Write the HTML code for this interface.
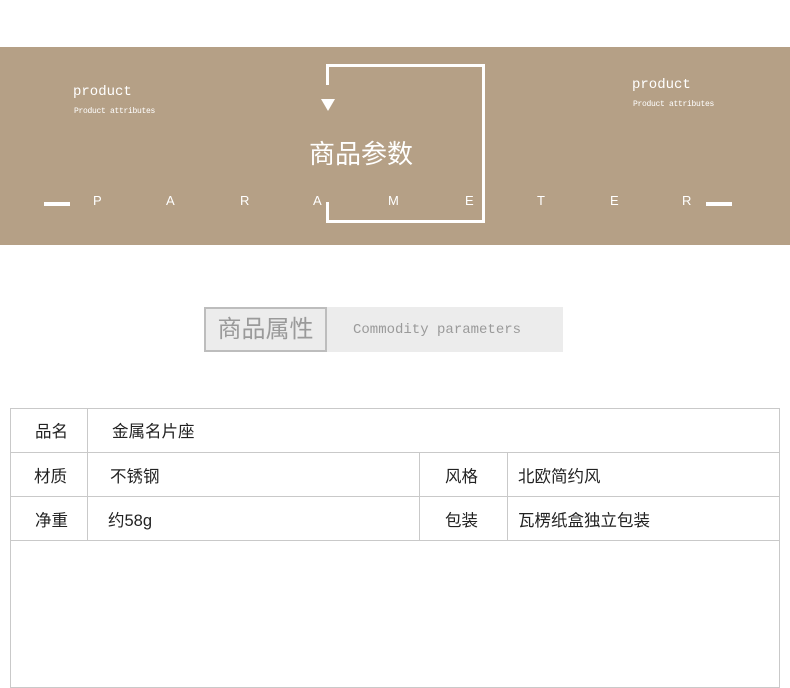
<!DOCTYPE html>
<html><head><meta charset="utf-8"><style>
*{margin:0;padding:0;box-sizing:border-box}
body{width:790px;height:678px;background:#fff;position:relative;overflow:hidden;font-family:"Liberation Sans","Noto Sans CJK SC",sans-serif}
.a{position:absolute}
.ban{left:0;top:47px;width:790px;height:198px;background:#b5a086}
.w{background:#fff}
.mono{font-family:"Liberation Mono","Noto Sans CJK SC",monospace;color:#fff}
.L{font-size:13px;color:#fff}
.t{font-size:16.5px;color:#222}
.line{background:#c9c9c9}
</style></head><body>
<div class="a ban"></div>
<div class="a mono" style="left:73px;top:84px;font-size:14px">product</div>
<div class="a mono" style="left:74px;top:107px;font-size:8px;letter-spacing:-0.3px">Product attributes</div>
<div class="a mono" style="left:632px;top:77px;font-size:14px">product</div>
<div class="a mono" style="left:633px;top:100px;font-size:8px;letter-spacing:-0.3px">Product attributes</div>
<div class="a w" style="left:326px;top:64px;width:159px;height:3px"></div>
<div class="a w" style="left:482px;top:64px;width:3px;height:159px"></div>
<div class="a w" style="left:326px;top:220px;width:159px;height:3px"></div>
<div class="a w" style="left:326px;top:64px;width:3px;height:21px"></div>
<div class="a w" style="left:326px;top:202px;width:3px;height:21px"></div>
<div class="a" style="left:321px;top:99px;width:0;height:0;border-left:7px solid transparent;border-right:7px solid transparent;border-top:12px solid #fff"></div>
<div class="a" style="left:309px;top:134px;font-size:26px;color:#fff">商品参数</div>
<div class="a w" style="left:44px;top:202px;width:26px;height:4px"></div>
<div class="a w" style="left:706px;top:202px;width:26px;height:4px"></div>
<div class="a L" style="left:93px;top:193px">P</div>
<div class="a L" style="left:166px;top:193px">A</div>
<div class="a L" style="left:240px;top:193px">R</div>
<div class="a L" style="left:313px;top:193px">A</div>
<div class="a L" style="left:388px;top:193px">M</div>
<div class="a L" style="left:465px;top:193px">E</div>
<div class="a L" style="left:537px;top:193px">T</div>
<div class="a L" style="left:610px;top:193px">E</div>
<div class="a L" style="left:682px;top:193px">R</div>
<div class="a" style="left:204px;top:307px;width:359px;height:45px;background:#ececec"></div>
<div class="a" style="left:204px;top:307px;width:123px;height:45px;border:2px solid #bdbdbd;background:#ececec;font-size:24px;color:#9a9a9a;text-align:center;line-height:41px">商品属性</div>
<div class="a" style="left:353px;top:322px;font-size:14px;color:#9a9a9a;font-family:'Liberation Mono',monospace">Commodity parameters</div>
<div class="a" style="left:10px;top:408px;width:770px;height:280px;border:1px solid #c9c9c9"></div>
<div class="a line" style="left:10px;top:452px;width:770px;height:1px"></div>
<div class="a line" style="left:10px;top:496px;width:770px;height:1px"></div>
<div class="a line" style="left:10px;top:540px;width:770px;height:1px"></div>
<div class="a line" style="left:87px;top:408px;width:1px;height:132px"></div>
<div class="a line" style="left:419px;top:452px;width:1px;height:88px"></div>
<div class="a line" style="left:507px;top:452px;width:1px;height:88px"></div>
<div class="a t" style="left:35px;top:418px">品名</div>
<div class="a t" style="left:112px;top:418px">金属名片座</div>
<div class="a t" style="left:34px;top:463px">材质</div>
<div class="a t" style="left:110px;top:463px">不锈钢</div>
<div class="a t" style="left:445px;top:463px">风格</div>
<div class="a t" style="left:518px;top:463px">北欧简约风</div>
<div class="a t" style="left:35px;top:507px">净重</div>
<div class="a t" style="left:108px;top:507px">约58g</div>
<div class="a t" style="left:445px;top:507px">包装</div>
<div class="a t" style="left:518px;top:507px">瓦楞纸盒独立包装</div>
</body></html>
